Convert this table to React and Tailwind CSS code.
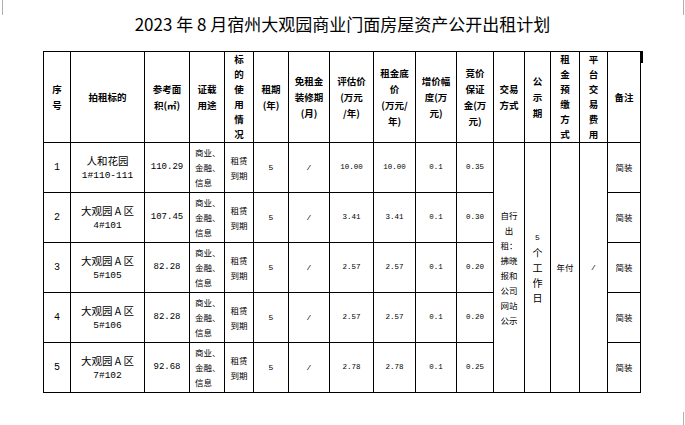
import React from 'react'

const CJK = "font-['Noto_Sans_CJK_SC','Liberation_Sans',sans-serif]"
const MONO = "font-['Liberation_Mono','Noto_Sans_CJK_SC',monospace]"

const colWidths = [
  'w-[27px]', 'w-[74px]', 'w-[45px]', 'w-[35px]', 'w-[29px]', 'w-[35px]', 'w-[41px]', 'w-[44px]',
  'w-[42px]', 'w-[41px]', 'w-[37px]', 'w-[31px]', 'w-[26px]', 'w-[29px]', 'w-[28px]', 'w-[33px]',
]

const rows = [
  { no: '1', name: ['人和花园', '1#110-111'], area: '110.29', price: '10.00', base: '10.00', inc: '0.1', dep: '0.35' },
  { no: '2', name: ['大观园 A 区', '4#101'], area: '107.45', price: '3.41', base: '3.41', inc: '0.1', dep: '0.30' },
  { no: '3', name: ['大观园 A 区', '5#105'], area: '82.28', price: '2.57', base: '2.57', inc: '0.1', dep: '0.20' },
  { no: '4', name: ['大观园 A 区', '5#106'], area: '82.28', price: '2.57', base: '2.57', inc: '0.1', dep: '0.20' },
  { no: '5', name: ['大观园 A 区', '7#102'], area: '92.68', price: '2.78', base: '2.78', inc: '0.1', dep: '0.25' },
]

// header cells, one entry per line
const headers = [
  ['序', '号'],
  ['拍租标的'],
  ['参考面', '积(㎡)'],
  ['证载', '用途'],
  ['标', '的', '使', '用', '情', '况'],
  ['租期', '(年)'],
  ['免租金', '装修期', '(月)'],
  ['评估价', '(万元', '/年)'],
  ['租金底', '价', '(万元/', '年)'],
  ['增价幅', '度(万', '元)'],
  ['竞价', '保证', '金(万', '元)'],
  ['交易', '方式'],
  ['公', '示', '期'],
  ['租', '金', '预', '缴', '方', '式'],
  ['平', '台', '交', '易', '费', '用'],
  ['备注'],
]

function Lines({ lines }) {
  return lines.map((l, i) => <div key={i}>{l}</div>)
}

const cell = 'border border-black p-0 align-middle text-center text-black'

export default function App() {
  return (
    <div className="relative w-[685px] h-[425px] bg-white overflow-hidden">
      {/* page corner marks */}
      <div className="absolute left-[2px] top-0 w-px h-[15px] bg-[#b0b0b0]" />
      <div className="absolute left-[683px] top-0 w-px h-[15px] bg-[#b0b0b0]" />
      <div className="absolute left-[683px] top-[412px] w-px h-[13px] bg-[#b0b0b0]" />

      <h1 className={`pt-[13px] h-[51px] text-center text-[17px] leading-[22px] font-normal text-black ${CJK}`}>
        2023 年 8 月宿州大观园商业门面房屋资产公开出租计划
      </h1>

      <div className="relative ml-[43px] w-[598px]">
        <div className="absolute left-[597px] top-0 w-[3px] h-[12px] bg-black" />
        <table className="table-fixed border-collapse w-[598px]">
          <colgroup>
            {colWidths.map((w, i) => <col key={i} className={w} />)}
          </colgroup>
          <thead>
            <tr className="h-[90px]">
              {headers.map((h, i) => (
                <th
                  key={i}
                  className={`${cell} ${CJK} font-bold text-[9.5px] ${h.length === 6 ? 'leading-[15px]' : 'leading-[16px]'}`}
                >
                  <Lines lines={h} />
                </th>
              ))}
            </tr>
          </thead>
          <tbody>
            {rows.map((r, i) => (
              <tr key={r.no} className="h-[50px]">
                <td className={`${cell} ${MONO} text-[10px]`}>{r.no}</td>
                <td className={`${cell} ${CJK} text-[10.5px] leading-[15px]`}>
                  <div>{r.name[0]}</div>
                  <div className={`${MONO} text-[9.5px]`}>{r.name[1]}</div>
                </td>
                <td className={`${cell} ${MONO} text-[9px]`}>{r.area}</td>
                <td className={`${cell} ${CJK} text-left pl-[5px] text-[8.5px] leading-[15px]`}>
                  <div>商业、</div>
                  <div>金融、</div>
                  <div>信息</div>
                </td>
                <td className={`${cell} ${CJK} text-[8.5px] leading-[15px]`}>
                  <div>租赁</div>
                  <div>到期</div>
                </td>
                <td className={`${cell} ${MONO} text-[8px]`}>5</td>
                <td className={`${cell} ${MONO} text-[8px]`}>/</td>
                <td className={`${cell} ${MONO} text-[7.5px]`}>{r.price}</td>
                <td className={`${cell} ${MONO} text-[7.5px]`}>{r.base}</td>
                <td className={`${cell} ${MONO} text-[7.5px]`}>{r.inc}</td>
                <td className={`${cell} ${MONO} text-[7.5px]`}>{r.dep}</td>
                {i === 0 && (
                  <>
                    <td rowSpan={5} className={`${cell} ${CJK} text-[8.5px] leading-[15px]`}>
                      <Lines lines={['自行', '出', '租：', '拂晓', '报和', '公司', '网站', '公示']} />
                    </td>
                    <td rowSpan={5} className={`${cell} ${CJK} text-[10px] leading-[15px]`}>
                      <div className={`${MONO} text-[8px]`}>5</div>
                      <Lines lines={['个', '工', '作', '日']} />
                    </td>
                    <td rowSpan={5} className={`${cell} ${CJK} text-[8.5px]`}>年付</td>
                    <td rowSpan={5} className={`${cell} ${MONO} text-[8px]`}>/</td>
                  </>
                )}
                <td className={`${cell} ${CJK} text-[8.5px]`}>简装</td>
              </tr>
            ))}
          </tbody>
        </table>
      </div>
    </div>
  )
}
